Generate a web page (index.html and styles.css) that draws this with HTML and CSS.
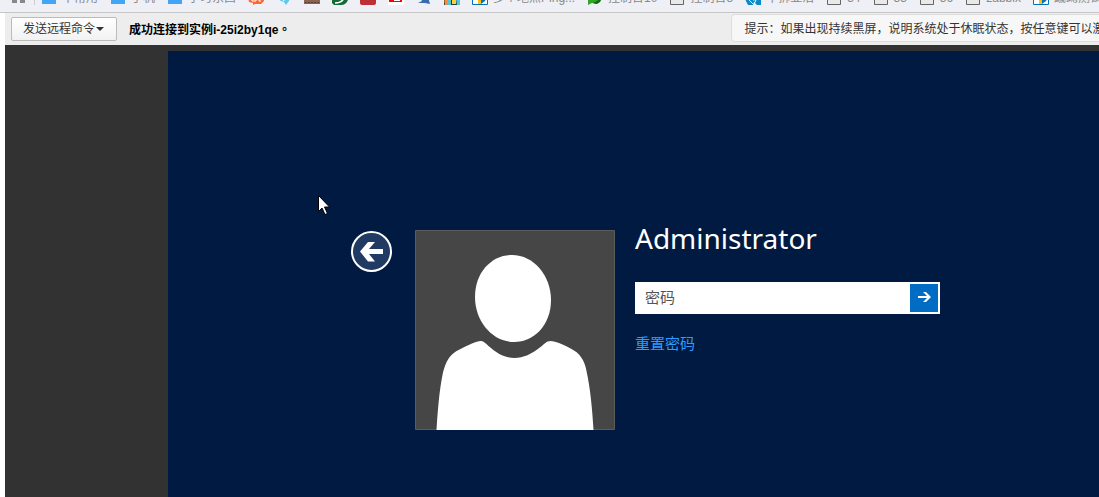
FILE: index.html
```html
<!DOCTYPE html>
<html lang="zh-CN">
<head>
<meta charset="utf-8">
<title>远程连接</title>
<link rel="stylesheet" href="styles.css">
</head>
<body>
<nav class="bookmarks" aria-label="书签">
  <div class="bookmark-row">
    <span class="apps"><svg class="icon" viewBox="0 0 16 16"><path fill="#888" d="M1 1h5v5H1zM9 1h5v5H9zM1 9h5v5H1zM9 9h5v5H9z"/></svg></span>
    <span class="mark"><svg class="icon" viewBox="0 0 16 16"><path fill="#42a5f5" d="M1 3h6l2 2h6v10H1z"/></svg>不常用</span>
    <span class="mark"><svg class="icon" viewBox="0 0 16 16"><path fill="#42a5f5" d="M1 3h6l2 2h6v10H1z"/></svg>手机</span>
    <span class="mark"><svg class="icon" viewBox="0 0 16 16"><path fill="#42a5f5" d="M1 3h6l2 2h6v10H1z"/></svg>学习东西</span>
    <span class="mark"><svg class="icon" viewBox="0 0 16 16"><path fill="#ff6633" d="M0 8h16v4l-3 3H7l-2 1v-2l-4-1z"/><path fill="none" stroke="#fff" d="M4 10v2h4v-2m3 0v2h2"/></svg></span>
    <span class="mark"><svg class="icon" viewBox="0 0 16 16"><path fill="#5bc8ef" d="M2 10l12-2-1 4-3 4-2-3-3-1z"/><path stroke="#fff" d="M7 12l4-3"/></svg></span>
    <span class="mark"><svg class="icon" viewBox="0 0 16 16"><path fill="#8b6552" d="M0 11h16v4H0z"/><path stroke="#5d3d2d" stroke-dasharray="2 1" d="M1 13.500h14"/><path stroke="#b5a6a0" d="M2 10.500h13"/></svg></span>
    <span class="mark"><svg class="icon" viewBox="0 0 16 16"><path fill="#126b35" d="M0 8h16v3q-2 5-7 5H2l-2-2z"/><path fill="none" stroke="#fff" stroke-width="1.500" d="M3 14q7 0 9-5"/></svg></span>
    <span class="mark"><svg class="icon" viewBox="0 0 16 16"><rect width="16" height="16" rx="2" fill="#bd3035"/></svg></span>
    <span class="mark"><svg class="icon" viewBox="0 0 16 16"><path fill="#fff" d="M0 0h16v16H0z"/><path fill="#f00" d="M1 8h13v5H1z"/><path stroke="#fff" d="M6 11.500h6"/></svg></span>
    <span class="mark"><svg class="icon" viewBox="0 0 16 16"><path fill="#386cae" d="M4 8h8l2 7-5-1-7 0 4-2z"/></svg></span>
    <span class="mark"><svg class="icon" viewBox="0 0 16 16"><path fill="#263e43" d="M0 0h16v16H0z"/><path fill="#f98b3b" d="M0 9l4 1 1 6H1z"/><path fill="#56c4d4" d="M4 9h3v7H4zM12 10h4v6h-3z"/><path fill="#ffce3c" d="M8 11h4v4H8z"/></svg></span>
    <span class="mark"><svg class="icon" viewBox="0 0 16 16"><path fill="#fff" stroke="#0872b9" d="M.5.5h15v15H.5z"/><path fill="#ffc20e" d="M6 7h3v8H6z"/><path fill="#0872b9" d="M9 8h6l-2 4-4 3z"/></svg>多个地点Ping...</span>
    <span class="mark"><svg class="icon" viewBox="0 0 16 16"><path fill="#35a329" d="M1 3l13 5v4l-5 3-4-1-4 2z"/><path fill="#136713" d="M6 14l4-2 4-3-1 4-3 2z"/></svg>控制台10</span>
    <span class="mark"><svg class="icon" viewBox="0 0 16 16"><path fill="#e9e9e9" stroke="#666" d="M1.500.5h13v15h-13z"/></svg>控制台8</span>
    <span class="mark"><svg class="icon" viewBox="0 0 16 16"><path fill="#078ac5" d="M0 10l5-2 4 4 2-4h5v8h-4l-3-3-1 3H3z"/><path stroke="#fff" d="M3 10l5 5M11 11l-2 4"/></svg>半拆亚洁</span>
    <span class="mark"><svg class="icon" viewBox="0 0 16 16"><path fill="#e9e9e9" stroke="#666" d="M1.500.5h13v15h-13z"/></svg>34</span>
    <span class="mark"><svg class="icon" viewBox="0 0 16 16"><path fill="#e9e9e9" stroke="#666" d="M1.500.5h13v15h-13z"/></svg>33</span>
    <span class="mark"><svg class="icon" viewBox="0 0 16 16"><path fill="#e9e9e9" stroke="#666" d="M1.500.5h13v15h-13z"/></svg>36</span>
    <span class="mark"><svg class="icon" viewBox="0 0 16 16"><path fill="#e9e9e9" stroke="#666" d="M1.500.5h13v15h-13z"/></svg>zabbix</span>
    <span class="mark"><svg class="icon" viewBox="0 0 16 16"><path fill="#fff" stroke="#0872b9" d="M.5.5h15v15H.5z"/><path fill="#ffc20e" d="M6 7h3v8H6z"/><path fill="#0872b9" d="M9 8h6l-2 4-4 3z"/></svg>蹴踘测试站</span>
  </div>
</nav>
<div class="page">
  <header class="toolbar">
    <div class="toolbar-main">
      <button class="command" type="button">发送远程命令<span class="caret"></span></button>
      <strong class="status">成功连接到实例i-25i2by1qe<span class="stop">。</span></strong>
    </div>
    <p class="hint">提示：如果出现持续黑屏，说明系统处于休眠状态，按任意键可以激活。</p>
  </header>
  <main class="viewer">
    <div class="desktop">
      <form class="login">
        <button class="back" type="button" aria-label="返回">
          <svg width="41" height="41" viewBox="0 0 41 41"><circle cx="20.500" cy="20.500" r="19.500" fill="#213a63" stroke="#fff" stroke-width="2"/><path fill="#fff" d="M9 20.500L17 11h7l-6 7h14v5H18l6 7.500h-7z"/></svg>
        </button>
        <svg class="avatar" viewBox="0 0 200 200" role="img" aria-label="用户头像"><path fill="#464646" stroke="#5b5b5b" d="M.5.5h199v199H.5z"/><path fill="#fff" d="M97 25c22 0 39 21 39 45 0 25-17 42-37 42-22 0-39-21-39-45 0-25 17-42 37-42z"/><path fill="#fff" d="M21.500 200c1-18 3-41 6-55 4-18 10-22 18-26 8-4 16-8 20-8 3 0 5 2 8 5 9 8 17 12 26 12s17-4 26-11c4-3 6-6 10-6 5 0 14 4 21 8 8 4 13 11 15 22 4 18 6 41 7 59z"/></svg>
        <div class="account">
          <h1 class="user">Administrator</h1>
          <div class="field">
            <input class="password" type="password" placeholder="密码" aria-label="密码">
            <button class="submit" type="submit" aria-label="登录">
              <svg width="28" height="28" viewBox="0 0 28 28"><path fill="#fff" d="M8 12h9l-4-4h3l5 5-5 5h-3l4-4H8z"/></svg>
            </button>
          </div>
          <a class="reset" href="#">重置密码</a>
        </div>
      </form>
      <svg class="pointer" width="12" height="20" viewBox="0 0 12 20"><path fill="#fff" stroke="#000" d="M.5.500v16l3.500-3.500 3 6.500 2.500-1-3-6.500h5z"/></svg>
    </div>
  </main>
</div>
</body>
</html>
```
FILE: styles.css
```css
* {
  box-sizing: border-box;
}

body {
  margin: 0;
  height: 100vh;
  display: flex;
  flex-direction: column;
  overflow: hidden;
  background: #fff;
  color: #333;
  font: 12px/16px "Liberation Sans", "Noto Sans CJK SC", sans-serif;
}

button,
input {
  font: inherit;
}

svg {
  display: block;
  flex: none;
}

.bookmarks {
  flex: none;
  display: flex;
  align-items: flex-end;
  height: 13px;
  padding: 0 0 5px 11px;
  background: #eff0f5;
  border-bottom: 1px solid #c6c6c6;
}

.bookmark-row {
  display: flex;
  gap: 12px;
  color: #888;
  line-height: 18px;
  white-space: nowrap;
}

.mark {
  flex: none;
  display: flex;
  gap: 5px;
}

.apps {
  flex: none;
  width: 24px;
  height: 16px;
  margin-right: -6px;
  border-right: 1px solid #ccc;
}

.icon {
  width: 16px;
  height: 16px;
}

.page {
  flex: 1;
  display: flex;
  flex-direction: column;
  min-height: 0;
  padding-left: 5px;
}

.toolbar {
  flex: none;
  display: flex;
  height: 32px;
  background: #ededed;
}

.toolbar-main {
  flex: none;
  display: flex;
  align-items: center;
  gap: 12px;
  width: 66.4%;
  padding-left: 6px;
}

.command {
  display: flex;
  align-items: center;
  height: 24px;
  padding: 0 12px 0 11px;
  border: 1px solid #bbb;
  border-radius: 2px;
  background: linear-gradient(#fff, #f2f2f2);
  color: #333;
  white-space: nowrap;
}

.caret {
  margin-left: 1px;
  border: 4px solid transparent;
  border-top-color: #333;
  border-bottom: 0;
}

.status {
  color: #000;
  white-space: nowrap;
}

.stop {
  font-family: "Noto Sans CJK TC", sans-serif;
}

.hint {
  flex: none;
  height: 28px;
  margin: 1px 0 0;
  padding: 6px 12px 4px;
  border: 1px solid #ddd;
  border-radius: 4px;
  background: #f7f7f7;
  white-space: nowrap;
}

.viewer {
  flex: 1;
  display: flex;
  min-height: 0;
  padding: 6px 0 0 163px;
  background: #323232;
}

.desktop {
  position: relative;
  flex: 1;
  padding: 179px 0 0 183px;
  background: #001a41;
}

.login {
  display: flex;
  align-items: flex-start;
}

.back {
  margin: 1px 23px 0 0;
  padding: 0;
  border: 0;
  border-radius: 50%;
  background: none;
}

.avatar {
  width: 200px;
  height: 200px;
  margin-right: 20px;
}

.account {
  width: 305px;
  font-size: 15px;
  line-height: 20px;
}

.user {
  margin: 0 0 36px;
  color: #fff;
  font: 28px/16px "Noto Sans", "Open Sans", sans-serif;
}

.field {
  display: flex;
  height: 32px;
  margin-bottom: 20px;
  padding: 2px;
  background: #fff;
}

.password {
  flex: 1;
  min-width: 0;
  padding: 0 8px;
  border: 0;
  outline: 0;
  background: #fff;
  color: #333;
}

.password::placeholder {
  color: #555;
}

.submit {
  width: 28px;
  padding: 0;
  border: 0;
  background: #006cc4;
}

.reset {
  color: #2f9bff;
  text-decoration: none;
}

.pointer {
  position: absolute;
  left: 150px;
  top: 144px;
}
```
